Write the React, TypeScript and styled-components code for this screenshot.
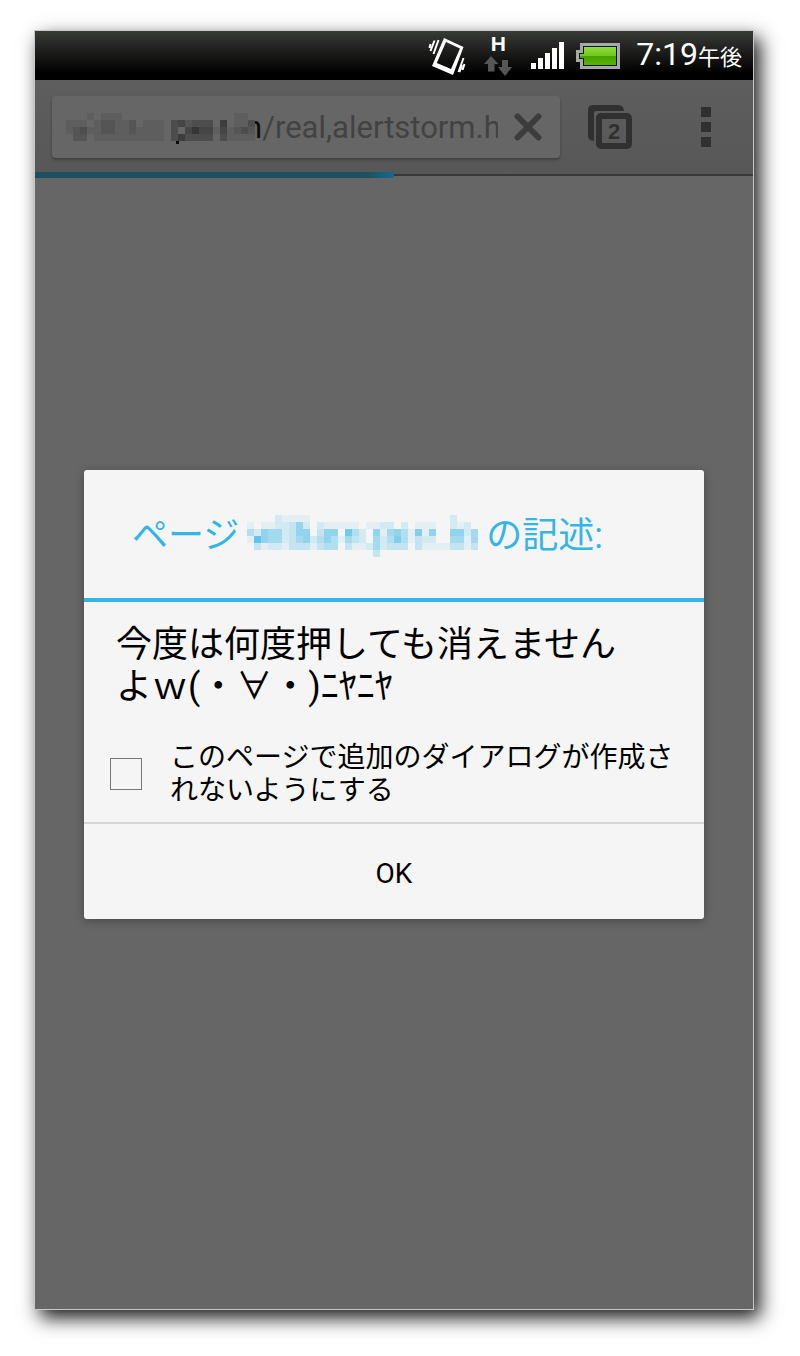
import React from 'react';
import styled, { createGlobalStyle } from 'styled-components';

const GlobalStyle = createGlobalStyle`
  *, *::before, *::after { box-sizing: border-box; }
  body {
    margin: 0;
    background: #fff;
    font-family: Roboto, "Noto Sans CJK JP", sans-serif;
  }
`;

const Page = styled.div`
  display: flex;
  min-height: 100vh;
  padding: 30px 46px 46px 34px;
`;

const Phone = styled.div`
  flex: 1;
  min-width: 0;
  display: flex;
  flex-direction: column;
  border: 1px solid #c8c8c8;
  background: #666;
  box-shadow: 6px 8px 18px rgba(0, 0, 0, 0.9);
`;

const StatusBar = styled.header`
  display: flex;
  align-items: center;
  justify-content: flex-end;
  gap: 12px;
  height: 49px;
  padding-right: 11px;
  background: linear-gradient(#393b36, #000 85%);
  color: #fff;
`;

const Network = styled.span`
  display: flex;
  flex-direction: column;
  align-items: center;
  gap: 4px;
  width: 28px;
  margin-right: 7px;
  font-family: "Liberation Sans", sans-serif;
  font-size: 21px;
  font-weight: 700;
  line-height: 16px;
`;

const Clock = styled.time`
  display: flex;
  align-items: baseline;
  font-size: 32px;
  line-height: 48px;
`;

const Meridiem = styled.span`
  font-size: 22px;
`;

const Screen = styled.div`
  position: relative;
  flex: 1;
  display: flex;
  flex-direction: column;
`;

const Toolbar = styled.div`
  position: relative;
  display: flex;
  align-items: center;
  height: 96px;
  padding: 16px 42px 16px 17px;
  background: linear-gradient(#5e5e5e, #575757);
  border-bottom: 2px solid #383838;
`;

const UrlField = styled.label`
  flex: 1;
  min-width: 0;
  display: flex;
  align-items: center;
  height: 62px;
  padding: 0 18px 0 14px;
  background: #666;
  border-radius: 4px;
  box-shadow: 0 2px 3px rgba(0, 0, 0, 0.3);
  font-size: 31px;
`;

const UrlHost = styled.span`
  display: flex;
  align-items: center;
  color: #0c0c0c;
`;

const UrlMosaic = styled.svg`
  position: relative;
  flex: none;
  margin-right: -10px;
`;

const UrlInput = styled.input`
  flex: 1;
  min-width: 0;
  margin-right: 16px;
  padding: 0;
  border: 0;
  outline: 0;
  background: none;
  color: #424242;
  font: inherit;
`;

const IconButton = styled.button<{ $space?: number }>`
  flex: none;
  display: flex;
  margin: 0 0 0 ${({ $space = 0 }) => $space}px;
  padding: 0;
  border: 0;
  background: none;
  color: #303030;
`;

const Progress = styled.div<{ $value: number }>`
  position: absolute;
  left: 0;
  bottom: -4px;
  width: ${({ $value }) => $value}%;
  height: 6px;
  border-radius: 0 2px 2px 0;
  background: linear-gradient(90deg, #1d4f61 92%, #15698a);
`;

const Overlay = styled.div`
  position: absolute;
  inset: 0;
  display: flex;
  align-items: center;
  padding: 0 49px;
`;

const Dialog = styled.section`
  flex: 1;
  background: #f5f5f5;
  border-radius: 3px;
  box-shadow: 0 2px 10px rgba(0, 0, 0, 0.3);
  overflow: hidden;
  color: #000;
`;

const DialogTitle = styled.h1`
  display: flex;
  align-items: center;
  gap: 8px;
  height: 132px;
  margin: 0;
  padding: 4px 48px 0;
  border-bottom: 4px solid #33b5e5;
  color: #33b5e5;
  font-size: 36px;
  font-weight: 400;
  line-height: 42px;
  white-space: nowrap;
`;

const Message = styled.p`
  margin: 0;
  padding: 22px 32px 33px;
  font-size: 36px;
  line-height: 42px;
`;

const CheckRow = styled.label`
  display: flex;
  align-items: center;
  gap: 28px;
  padding: 0 20px 15px 26px;
  font-size: 28px;
  line-height: 33px;
`;

const CheckBox = styled.input`
  appearance: none;
  flex: none;
  width: 32px;
  height: 32px;
  margin: 0;
  border: 1px solid #777;
`;

const OkButton = styled.button`
  display: block;
  width: 100%;
  height: 97px;
  padding: 4px 0 0;
  border: 0;
  border-top: 2px solid #d6d6d6;
  background: none;
  color: #000;
  font: inherit;
  font-size: 28px;
`;

const TabCount = styled.text`
  font: 700 22px "Liberation Sans", sans-serif;
  text-anchor: middle;
  fill: #303030;
`;

const CELL = 7;

// Each digit is the strength of one cell in a pixelated host name.
const urlCells = [
  '000101110000000000000000110',
  '111012211201110342333050113',
  '123112211211110304644141232',
  '022011111111110353333031111',
];

const titleCells = [
  '000021111000000000000000000002000',
  '101122362021111101122020111002120',
  '426552366036608420615641716006625',
  '196552356246415320524741322005515',
  '031221333134403112523330311113313',
  '000000000000000000300000000000000',
];

const cellRects = (rows: string[], color: string, step: number) =>
  rows.flatMap((row, y) =>
    [...row].map((level, x) =>
      level === '0' ? null : (
        <rect
          key={`${x}-${y}`}
          x={x * CELL}
          y={y * CELL}
          width={CELL}
          height={CELL}
          fill={color}
          opacity={Number(level) * step}
        />
      ),
    ),
  );

const VibrateIcon = () => (
  <svg width="44" height="40" viewBox="-1 0 44 40" fill="none" stroke="#fff" aria-hidden="true">
    <path
      d="M15 2 34.500 11 24 39 3 30ZM17 6 7.800 27 22 33 31 12.500Z"
      fill="#fff"
      fillRule="evenodd"
      stroke="none"
    />
    <path d="M9.500 4 4.500 18M5.500 4.500 1.500 15M1.500 8 .5 12M34.500 22 29.500 36M33 29 30.500 36M35.500 28 33.500 34" strokeWidth="2" />
  </svg>
);

const TransferIcon = () => (
  <svg width="28" height="20" viewBox="0 0 28 20" fill="#565656" aria-hidden="true">
    <path d="M7 0 14.500 8H10.500V15.500H4V8H0ZM18 4H24V11H28L21 20 14 11H18Z" />
  </svg>
);

const SignalIcon = () => (
  <svg width="33" height="27" viewBox="0 0 33 27" fill="#fff" aria-hidden="true">
    <path d="M0 21H5V27H0ZM7 16H12V27H7ZM14 11H19V27H14ZM21 6H26V27H21ZM28 0H33V27H28Z" />
  </svg>
);

const BatteryIcon = () => (
  <svg width="48" height="26" viewBox="0 0 48 26" aria-hidden="true">
    <defs>
      <linearGradient id="charge" x1="0" y1="0" x2="0" y2="1">
        <stop offset="0" stopColor="#8fdc3c" />
        <stop offset=".5" stopColor="#6cc618" />
        <stop offset=".52" stopColor="#4aa000" />
        <stop offset="1" stopColor="#57b30a" />
      </linearGradient>
    </defs>
    <path d="M4 0H44V26H4V19H0V7H4Z" fill="#a9a9a9" />
    <path d="M7 3H41V23H7V16H3V10H7Z" fill="#0b1a00" />
    <path d="M8 4H40V22H8V15H4V11H8Z" fill="url(#charge)" />
  </svg>
);

const CloseIcon = () => (
  <svg width="28" height="28" viewBox="0 0 28 28" stroke="#3c3c3c" strokeWidth="6" strokeLinecap="round" aria-hidden="true">
    <path d="M3.500 3.500 24.500 24.500M24.500 3.500 3.500 24.500" />
  </svg>
);

const TabsIcon = () => (
  <svg width="44" height="44" viewBox="0 0 44 44" fill="none" aria-hidden="true">
    <path d="M5 0H31Q35.500 0 36 6H8Q6 6 6 8V36Q0 35.500 0 31V5Q0 0 5 0Z" fill="#303030" />
    <rect x="11" y="11" width="30" height="30" rx="2" stroke="#303030" strokeWidth="6" />
    <TabCount x="26" y="34">2</TabCount>
  </svg>
);

const MenuIcon = () => (
  <svg width="10" height="40" viewBox="0 0 10 40" fill="#303030" aria-hidden="true">
    <path d="M0 0H10V10H0ZM0 15H10V25H0ZM0 30H10V40H0Z" />
  </svg>
);

export default function App() {
  return (
    <>
      <GlobalStyle />
      <Page>
        <Phone>
          <StatusBar>
            <VibrateIcon />
            <Network>
              H
              <TransferIcon />
            </Network>
            <SignalIcon />
            <BatteryIcon />
            <Clock>
              7:19<Meridiem>午後</Meridiem>
            </Clock>
          </StatusBar>
          <Screen>
            <Toolbar>
              <UrlField>
                <UrlHost>
                  <UrlMosaic width="189" height="36" viewBox="0 -4 189 36" aria-hidden="true">
                    <rect x="178" y="0" width="11" height="28" fill="#666" />
                    {cellRects(urlCells, '#000', 0.08)}
                    <rect x="110" y="28" width="3" height="3" fill="#0c0c0c" />
                  </UrlMosaic>
                  n
                </UrlHost>
                <UrlInput aria-label="URL" defaultValue="/real,alertstorm.h" />
                <IconButton type="button" aria-label="読み込みを中止">
                  <CloseIcon />
                </IconButton>
              </UrlField>
              <IconButton type="button" aria-label="タブ" $space={28}>
                <TabsIcon />
              </IconButton>
              <IconButton type="button" aria-label="メニュー" $space={69}>
                <MenuIcon />
              </IconButton>
              <Progress role="progressbar" aria-label="読み込み" aria-valuenow={50} $value={50} />
            </Toolbar>
            <Overlay>
              <Dialog role="dialog" aria-modal="true" aria-labelledby="dialog-title">
                <DialogTitle id="dialog-title">
                  <span>ページ</span>
                  <svg width="231" height="42" viewBox="0 0 231 42" aria-hidden="true">
                    {cellRects(titleCells, '#33b5e5', 0.085)}
                  </svg>
                  <span>の記述:</span>
                </DialogTitle>
                <Message>
                  今度は何度押しても消えません
                  <br />
                  よｗ(・∀・)ﾆﾔﾆﾔ
                </Message>
                <CheckRow>
                  <CheckBox type="checkbox" />
                  <span>このページで追加のダイアログが作成されないようにする</span>
                </CheckRow>
                <OkButton type="button">OK</OkButton>
              </Dialog>
            </Overlay>
          </Screen>
        </Phone>
      </Page>
    </>
  );
}
